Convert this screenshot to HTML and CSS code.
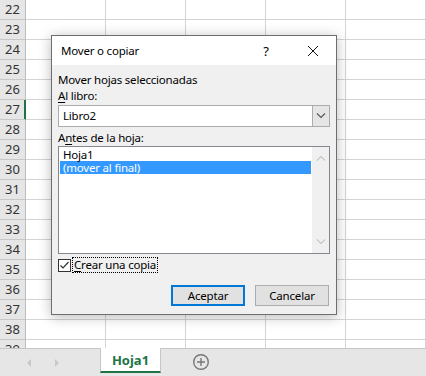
FILE: index.html
```html
<!DOCTYPE html>
<html lang="es">
<head>
    <meta charset="UTF-8">
    <title>Mover o copiar</title>
    <link rel="stylesheet" href="styles.css">
</head>
<body>
    <div class="app">
        <div class="sheet">
            <div class="row"><div class="rh">22</div><div class="cell"></div><div class="cell"></div><div class="cell"></div><div class="cell"></div><div class="cell"></div></div>
            <div class="row"><div class="rh">23</div><div class="cell"></div><div class="cell"></div><div class="cell"></div><div class="cell"></div><div class="cell"></div></div>
            <div class="row"><div class="rh">24</div><div class="cell"></div><div class="cell"></div><div class="cell"></div><div class="cell"></div><div class="cell"></div></div>
            <div class="row"><div class="rh">25</div><div class="cell"></div><div class="cell"></div><div class="cell"></div><div class="cell"></div><div class="cell"></div></div>
            <div class="row"><div class="rh">26</div><div class="cell"></div><div class="cell"></div><div class="cell"></div><div class="cell"></div><div class="cell"></div></div>
            <div class="row"><div class="rh sel">27</div><div class="cell"></div><div class="cell"></div><div class="cell"></div><div class="cell"></div><div class="cell"></div></div>
            <div class="row"><div class="rh">28</div><div class="cell"></div><div class="cell"></div><div class="cell"></div><div class="cell"></div><div class="cell"></div></div>
            <div class="row"><div class="rh">29</div><div class="cell"></div><div class="cell"></div><div class="cell"></div><div class="cell"></div><div class="cell"></div></div>
            <div class="row"><div class="rh">30</div><div class="cell"></div><div class="cell"></div><div class="cell"></div><div class="cell"></div><div class="cell"></div></div>
            <div class="row"><div class="rh">31</div><div class="cell"></div><div class="cell"></div><div class="cell"></div><div class="cell"></div><div class="cell"></div></div>
            <div class="row"><div class="rh">32</div><div class="cell"></div><div class="cell"></div><div class="cell"></div><div class="cell"></div><div class="cell"></div></div>
            <div class="row"><div class="rh">33</div><div class="cell"></div><div class="cell"></div><div class="cell"></div><div class="cell"></div><div class="cell"></div></div>
            <div class="row"><div class="rh">34</div><div class="cell"></div><div class="cell"></div><div class="cell"></div><div class="cell"></div><div class="cell"></div></div>
            <div class="row"><div class="rh">35</div><div class="cell"></div><div class="cell"></div><div class="cell"></div><div class="cell"></div><div class="cell"></div></div>
            <div class="row"><div class="rh">36</div><div class="cell"></div><div class="cell"></div><div class="cell"></div><div class="cell"></div><div class="cell"></div></div>
            <div class="row"><div class="rh">37</div><div class="cell"></div><div class="cell"></div><div class="cell"></div><div class="cell"></div><div class="cell"></div></div>
            <div class="row"><div class="rh">38</div><div class="cell"></div><div class="cell"></div><div class="cell"></div><div class="cell"></div><div class="cell"></div></div>
            <div class="row"><div class="rh">39</div><div class="cell"></div><div class="cell"></div><div class="cell"></div><div class="cell"></div><div class="cell"></div></div>
        </div>

        <div class="tabbar">
            <div class="nav">
                <svg width="6" height="8" viewBox="0 0 6 8"><path d="M5 0 L1 4 L5 8 Z" fill="#c8c8c8"/></svg>
                <svg width="6" height="8" viewBox="0 0 6 8"><path d="M1 0 L5 4 L1 8 Z" fill="#c8c8c8"/></svg>
            </div>
            <div class="tab">Hoja1</div>
            <div class="add">
                <svg width="18" height="18" viewBox="0 0 18 18">
                    <circle cx="9" cy="9" r="7.3" fill="none" stroke="#777" stroke-width="1.4"/>
                    <path d="M9 5 V13 M5 9 H13" stroke="#777" stroke-width="1.4"/>
                </svg>
            </div>
        </div>

        <div class="dialog">
            <div class="titlebar">
                <span class="title">Mover o copiar</span>
                <span class="help">?</span>
                <svg class="close" width="12" height="12" viewBox="0 0 12 12"><path d="M1 1 L11 11 M11 1 L1 11" stroke="#111" stroke-width="1"/></svg>
            </div>
            <div class="body">
                <div class="label">Mover hojas seleccionadas</div>
                <div class="label"><u>A</u>l libro:</div>
                <div class="combo">
                    <span class="combo-text">Libro2</span>
                    <span class="combo-btn">
                        <svg width="10" height="6" viewBox="0 0 10 6"><path d="M1 0.5 L5 4.5 L9 0.5" fill="none" stroke="#555" stroke-width="1.1"/></svg>
                    </span>
                </div>
                <div class="label gap">A<u>n</u>tes de la hoja:</div>
                <div class="listbox">
                    <div class="items">
                        <div class="item">Hoja1</div>
                        <div class="item active">(mover al final)</div>
                    </div>
                    <div class="scroll">
                        <svg width="10" height="6" viewBox="0 0 10 6"><path d="M1 5.5 L5 1.5 L9 5.5" fill="none" stroke="#c6c6c6" stroke-width="1.2"/></svg>
                        <svg width="10" height="6" viewBox="0 0 10 6"><path d="M1 0.5 L5 4.5 L9 0.5" fill="none" stroke="#c6c6c6" stroke-width="1.2"/></svg>
                    </div>
                </div>
                <div class="check-row">
                    <span class="checkbox">
                        <svg width="11" height="11" viewBox="0 0 11 11"><path d="M1.5 5.5 L4 8 L9.5 2" fill="none" stroke="#333" stroke-width="1.2"/></svg>
                    </span>
                    <span class="check-label"><u>C</u>rear una copia</span>
                </div>
                <div class="buttons">
                    <button class="btn primary">Aceptar</button>
                    <button class="btn">Cancelar</button>
                </div>
            </div>
        </div>
    </div>
</body>
</html>
```

FILE: styles.css
```css
/* Base */
body {
    margin: 0;
    font-family: "Noto Sans", "Open Sans", sans-serif;
    background: #ffffff;
    color: #000;
}

.app {
    position: relative;
    width: 426px;
    height: 376px;
    display: flex;
    flex-direction: column;
    overflow: hidden;
}

/* Worksheet grid */
.sheet {
    flex: 1;
    overflow: hidden;
}

.row {
    display: flex;
    height: 20px;
}

.rh {
    width: 25px;
    height: 19px;
    flex: none;
    background: #e6e6e6;
    border-right: 1px solid #bcbcbc;
    border-bottom: 1px solid #c8c8c8;
    color: #333;
    font-size: 13px;
    line-height: 19px;
    text-align: center;
}

.rh.sel {
    border-right-color: #217346;
    box-shadow: inset -1px 0 #217346;
}

.cell {
    width: 79px;
    height: 19px;
    flex: none;
    border-right: 1px solid #d4d4d4;
    border-bottom: 1px solid #d4d4d4;
}

/* Sheet tabs */
.tabbar {
    height: 28px;
    flex: none;
    display: flex;
    align-items: stretch;
    background: #e6e6e6;
    border-top: 1px solid #c6c6c6;
    box-sizing: border-box;
}

.nav {
    width: 100px;
    display: flex;
    align-items: center;
    gap: 22px;
    padding-left: 26px;
    box-sizing: border-box;
}

.tab {
    width: 59px;
    margin-top: -1px;
    background: #fff;
    border-left: 1px solid #c6c6c6;
    border-right: 1px solid #c6c6c6;
    border-bottom: 2px solid #217346;
    margin-bottom: 3px;
    color: #217346;
    font-weight: bold;
    font-size: 13px;
    line-height: 24px;
    text-align: center;
}

.add {
    display: flex;
    align-items: center;
    padding-left: 31px;
    padding-bottom: 2px;
}

/* Dialog */
.dialog {
    position: absolute;
    left: 51px;
    top: 35px;
    width: 284px;
    height: 278px;
    border: 1px solid #6e6e6e;
    background: #f0f0f0;
    box-shadow: 0 2px 12px rgba(0, 0, 0, 0.28);
    font-size: 11.5px;
    letter-spacing: -0.2px;
    display: flex;
    flex-direction: column;
}

.titlebar {
    height: 29px;
    background: #fff;
    display: flex;
    align-items: center;
    padding-left: 9px;
}

.title {
    flex: 1;
    font-size: 11.5px;
}

.help {
    width: 14px;
    text-align: center;
    font-size: 13px;
    margin-right: 34px;
}

.close {
    margin-right: 17px;
}

.body {
    flex: 1;
    padding: 7px 6px 8px 6px;
}

.label {
    height: 16px;
    line-height: 16px;
    white-space: nowrap;
}

.label.gap {
    margin-top: 3px;
}

u {
    text-decoration-thickness: 1px;
    text-underline-offset: 2px;
}

.combo {
    margin-top: 1px;
    height: 20px;
    width: 270px;
    border: 1px solid #acacac;
    background: #fff;
    display: flex;
}

.combo-text {
    flex: 1;
    padding-left: 4px;
    line-height: 20px;
}

.combo-btn {
    width: 16px;
    background: #e5e5e5;
    border-left: 1px solid #acacac;
    display: flex;
    align-items: center;
    justify-content: center;
}

.listbox {
    height: 106px;
    width: 270px;
    border: 1px solid #828790;
    background: #fff;
    display: flex;
}

.items {
    flex: 1;
    padding: 1px 1px 0 1px;
}

.item {
    height: 13px;
    line-height: 13px;
    padding-left: 3px;
}

.item.active {
    background: #3399ff;
    color: #fff;
}

.scroll {
    width: 17px;
    background: #f0f0f0;
    display: flex;
    flex-direction: column;
    justify-content: space-between;
    align-items: center;
    padding: 8px 0 8px 0;
}

.check-row {
    margin-top: 3px;
    height: 16px;
    display: flex;
    align-items: center;
}

.checkbox {
    width: 11px;
    height: 11px;
    border: 1px solid #333;
    background: #fff;
    display: flex;
}

.check-label {
    margin-left: 2px;
    padding: 0 1px;
    line-height: 14px;
    outline: 1px dotted #000;
}

.buttons {
    margin-top: 12px;
    display: flex;
    justify-content: flex-end;
    gap: 10px;
    padding-right: 1px;
}

.btn {
    width: 74px;
    height: 21px;
    border: 1px solid #adadad;
    background: #e1e1e1;
    font-family: inherit;
    font-size: 11.5px;
    letter-spacing: -0.2px;
    padding: 0;
    color: #000;
}

.btn.primary {
    border: 2px solid #0078d7;
}
```
